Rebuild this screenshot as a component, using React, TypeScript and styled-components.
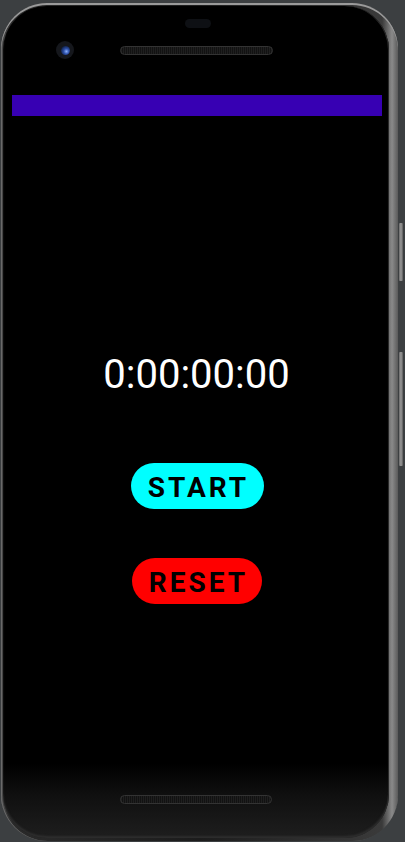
import React from 'react';
import styled, { createGlobalStyle } from 'styled-components';

const GlobalStyle = createGlobalStyle`
  html, body { margin: 0; padding: 0; }
  body {
    width: 405px; height: 842px; overflow: hidden;
    background: #3c3f41;
    font-family: Roboto, "Liberation Sans", sans-serif;
  }
`;

const Shell = styled.div`
  position: relative;
  box-sizing: border-box;
  width: 397px; height: 838px;
  margin: 3px 0 0 1px;
  border-radius: 46px;
  padding: 3px 9px 3px 2px;
  background: linear-gradient(90deg, #4a4a4a 0%, #2a2a2a 3%, #1c1c1c 50%, #3a3a3a 96%, #8a8a8a 98.5%, #5a5a5a 100%);
  box-shadow: inset 0 2px 0 #9a9a9a, inset 1px 0 0 #6a6a6a;
`;

const SideKey = styled.div<{ $top: number; $h: number }>`
  position: absolute;
  right: -5px; top: ${p => p.$top}px;
  width: 4px; height: ${p => p.$h}px;
  border-radius: 1px;
  background: linear-gradient(90deg, #6a6a6a, #9a9a9a 50%, #5a5a5a);
`;

const Body = styled.div`
  box-sizing: border-box;
  height: 100%;
  border-radius: 44px;
  background: linear-gradient(180deg, #000 0%, #000 91%, #101010 95%, #1e1e1e 100%);
  box-shadow: inset -1px 0 0 #2a2a2a, inset 0 -2px 2px #2e2e2e;
  display: flex; flex-direction: column; align-items: stretch;
  overflow: hidden;
`;

const Earpiece = styled.div`
  align-self: center;
  margin: 13px 0 0 3px;
  width: 26px; height: 9px;
  border-radius: 5px;
  background: #0e1014;
`;

const SensorRow = styled.div`
  display: flex; align-items: center;
  height: 18px;
  margin-top: 13px;
  padding-left: 53px;
  gap: 46px;
`;

const Camera = styled.div`
  width: 18px; height: 18px; border-radius: 50%;
  background: #15171c;
  display: flex; align-items: center; justify-content: center;
  &::after {
    content: '';
    width: 9px; height: 9px; border-radius: 50%;
    background: radial-gradient(circle at 60% 60%, #8ab0ff 0%, #2c4fa8 35%, #0c1a3a 80%);
  }
`;

const Grille = styled.div<{ $w: number }>`
  box-sizing: border-box;
  width: ${p => p.$w}px; height: 9px;
  border-radius: 5px;
  border: 1px solid #333;
  background: repeating-linear-gradient(90deg, #1f1f1f 0 1px, #121212 1px 2px);
`;

const Screen = styled.div`
  flex: 1;
  margin: 36px 7px 0 9px;
  display: flex; flex-direction: column;
`;

const AppBar = styled.div`
  height: 21px;
  background: #3700b3;
`;

const Content = styled.div`
  flex: 1;
  display: flex; flex-direction: column; align-items: center;
  padding-top: 239px;
`;

const Timer = styled.div`
  color: #fff;
  font-family: Roboto, sans-serif;
  font-size: 40px;
  line-height: 40px;
  margin-left: -1px;
`;

const PillButton = styled.button<{ $bg: string }>`
  box-sizing: border-box;
  height: 46px;
  padding: 0 0 0 3px;
  border: none;
  border-radius: 23px;
  background: ${p => p.$bg};
  color: #000;
  font-family: Roboto, sans-serif;
  font-weight: 700;
  font-size: 28px;
  letter-spacing: 3px;
  line-height: 49px;
  cursor: pointer;
`;

const StartButton = styled(PillButton)`
  width: 133px;
  margin-top: 68px;
`;

const ResetButton = styled(PillButton)`
  width: 130px;
  margin-top: 49px;
`;

const BottomBezel = styled.div`
  height: 43px;
  display: flex; justify-content: center;
`;

export default function App() {
  return (
    <>
      <GlobalStyle />
      <Shell>
        <SideKey $top={220} $h={58} />
        <SideKey $top={349} $h={114} />
        <Body>
          <Earpiece />
          <SensorRow>
            <Camera />
            <Grille $w={153} />
          </SensorRow>
          <Screen>
            <AppBar />
            <Content>
              <Timer>0:00:00:00</Timer>
              <StartButton $bg="#00ffff">START</StartButton>
              <ResetButton $bg="#ff0000">RESET</ResetButton>
            </Content>
          </Screen>
          <BottomBezel>
            <Grille $w={152} />
          </BottomBezel>
        </Body>
      </Shell>
    </>
  );
}
